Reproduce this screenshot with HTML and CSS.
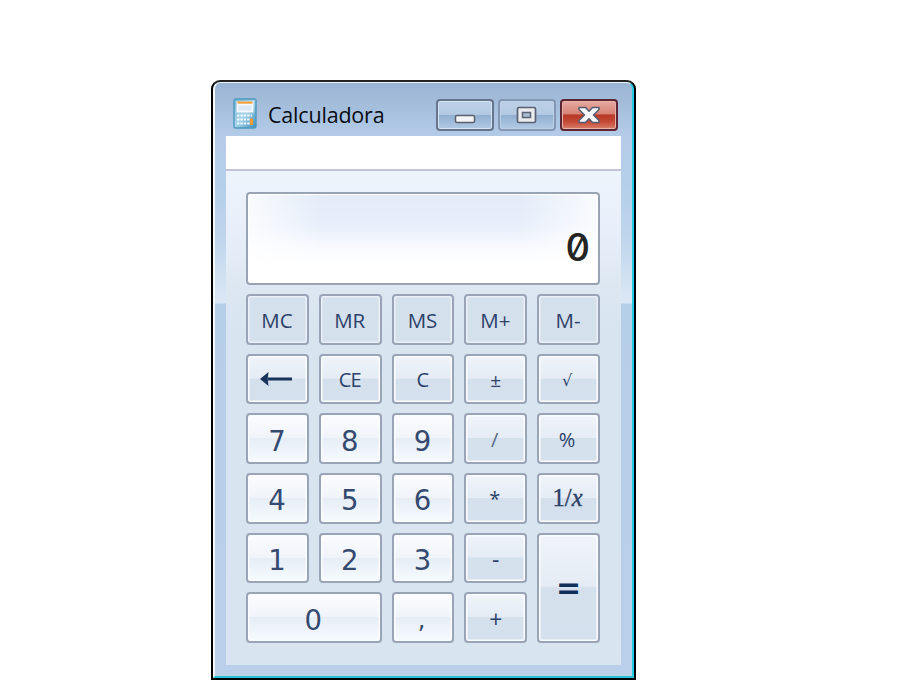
FILE: index.html
```html
<!DOCTYPE html>
<html lang="es">
<head>
<meta charset="utf-8">
<title>Calculadora</title>
<link rel="stylesheet" href="styles.css">
</head>
<body>
<main class="window">
  <div class="frame">
    <header class="titlebar">
      <svg class="app-icon" width="24" height="31" viewBox="0 0 24 31">
        <defs>
          <linearGradient id="case" x1="0" y1="0" x2="1" y2="1"><stop offset="0" stop-color="#79b5d3"/><stop offset=".5" stop-color="#a9d4ea"/><stop offset="1" stop-color="#3e8fb8"/></linearGradient>
        </defs>
        <rect x="1" y="1" width="22" height="29" rx="1.5" fill="url(#case)" stroke="#4c9abf" stroke-width="1.4"/>
        <rect x="3.5" y="3.5" width="17" height="11" fill="#f2f8fc"/>
        <rect x="4.5" y="3.5" width="15" height="2.2" fill="#f2a23c"/>
        <rect x="5.5" y="7.5" width="13" height="5" fill="#dbe9f7"/>
        <path d="M4 17.500h15M4 21.500h13M4 25.500h13" stroke="#edf8ff" stroke-width="2.200" stroke-dasharray="2.400 1"/>
        <rect x="17" y="20.500" width="3" height="6.500" fill="#f29a2e"/>
      </svg>
      <h1 class="title">Calculadora</h1>
      <div class="controls">
        <button class="ctl minimize" aria-label="Minimizar"><svg width="56" height="30" viewBox="0 0 56 30"><rect x="18.500" y="15.500" width="19" height="7" rx="1.500" fill="#f5f5f5" stroke="#5a6070" stroke-width="1.500"/></svg></button>
        <button class="ctl maximize" aria-label="Maximizar"><svg width="56" height="30" viewBox="0 0 56 30"><rect x="18.500" y="7.500" width="18" height="15" rx="1.500" fill="#e9ebef" stroke="#5a6272" stroke-width="1.700"/><rect x="23.500" y="12.500" width="8" height="5" fill="#a9bdd5" stroke="#5a6272" stroke-width="1.500"/></svg></button>
        <button class="ctl close" aria-label="Cerrar"><svg width="57" height="30" viewBox="0 0 57 30"><path d="M18 7.500h6.500l3.500 3.700 3.500-3.700H38v2L32.500 15l5.500 5.500v2h-6.500L28 18.700l-3.500 3.800H18v-2l5.500-5.500L18 9.500z" fill="#f6f7f8" stroke="#555b70" stroke-width="1.500" stroke-linejoin="round"/></svg></button>
      </div>
    </header>
    <section class="client">
      <div class="menubar"></div>
      <div class="body">
        <output class="display">0</output>
        <div class="keys">
          <button class="key flat">MC</button>
          <button class="key flat">MR</button>
          <button class="key flat">MS</button>
          <button class="key flat">M+</button>
          <button class="key flat">M-</button>
          <button class="key" aria-label="Retroceso"><svg class="arrow" width="32" height="16" viewBox="0 0 32 16"><path d="M8 8h24" stroke="#18345b" stroke-width="3"/><path d="M0 8L8.500 1Q7 8 8.500 15z" fill="#18345b"/></svg></button>
          <button class="key narrow">CE</button>
          <button class="key narrow">C</button>
          <button class="key sign">±</button>
          <button class="key root">√</button>
          <button class="key digit">7</button>
          <button class="key digit">8</button>
          <button class="key digit">9</button>
          <button class="key slash">/</button>
          <button class="key percent">%</button>
          <button class="key digit">4</button>
          <button class="key digit">5</button>
          <button class="key digit">6</button>
          <button class="key star">*</button>
          <button class="key inverse">1/<i>x</i></button>
          <button class="key digit">1</button>
          <button class="key digit">2</button>
          <button class="key digit">3</button>
          <button class="key minus">-</button>
          <button class="key equals" aria-label="Igual">=</button>
          <button class="key digit zero">0</button>
          <button class="key digit comma">,</button>
          <button class="key plus">+</button>
        </div>
      </div>
    </section>
  </div>
</main>
</body>
</html>
```
FILE: styles.css
```css
* { box-sizing: border-box; }
body { margin: 0; padding: 80px 0 0 211px; background: #fff; font-family: "Open Sans", "Noto Sans", sans-serif; }
button { margin: 0; padding: 0; font: inherit; }
.window {
  width: 425px;
  height: 600px;
  border: 2px solid #000;
  border-top-color: #222;
  border-radius: 9px 9px 0 0;
  background: #000;
}
.frame {
  height: 596px;
  padding: 1px 11px 11px;
  border: solid;
  border-width: 1px 2px 2px;
  border-color: #edf3fa #25cde3 #25c2d5 #f5f8fc;
  border-radius: 7px 7px 0 0;
  background: linear-gradient(#9ab5d3 0, #a6bfdd 26px, #b4cce8 54px, #b5cfea 105px, #bdd4eb 150px, #dce8f5 220px, #b6cfe8 221px, #bacfea 100%);
}
.titlebar { display: flex; align-items: flex-start; height: 52px; padding: 14px 3px 0 7px; }
.app-icon { flex: none; }
.title { margin: 1px 0 0 11px; width: 168px; font-size: 21.5px; line-height: 32px; font-weight: 400; color: #080b12; letter-spacing: -.2px; }
.controls { display: flex; gap: 4px; padding-top: 1px; }
.ctl {
  width: 58px;
  height: 32px;
  border: 2px solid #65758e;
  border-radius: 4px;
  background: linear-gradient(#bdd1e7 0, #b3cae3 48%, #92afd0 50%, #b1cae5 100%);
  box-shadow: inset 0 0 0 1px #d6e4f2;
  overflow: hidden;
}
.ctl svg { display: block; margin: -1px 0 0 -1px; }
.maximize { border-color: #8498b5; box-shadow: inset 0 0 0 1px #bcd0e7; }
.close { border-color: #5b2631; background: linear-gradient(#e7aaa0 0, #d78376 46%, #b63725 50%, #c54b37 75%, #d9806a 100%); box-shadow: inset 0 0 0 1px #e9b1a8; }
.client { height: 529px; background: linear-gradient(#edf4fc 34px, #e8effa 95px, #dce7f2 155px, #d8e4f0 195px, #d8e4f0 100%); }
.menubar { height: 35px; border-bottom: 2px solid #c4c3d9; background: #fff; }
.body { padding: 21px 21px 0 20px; }
.display {
  display: block;
  height: 93px;
  padding: 24px 8px 0 0;
  border: 2px solid #98a3b4;
  border-radius: 4px;
  background: linear-gradient(90deg, #fffc 0, #fff0 75px, #fff0 270px, #fffc 100%), linear-gradient(#e2ebf8 0, #e8effb 35%, #f9fbff 62%, #fff 78%);
  box-shadow: inset 0 0 0 1px #fff;
  font: 500 38px/58px Inter, sans-serif;
  font-feature-settings: "zero";
  text-align: right;
  color: #242424;
}
.keys { display: grid; grid-template-columns: repeat(5, 1fr); grid-template-rows: repeat(6, 1fr); gap: 9px 10px; height: 349px; margin-top: 9px; }
.key {
  display: flex;
  align-items: center;
  justify-content: center;
  border: 2px solid #99a5b7;
  border-radius: 4px;
  background: linear-gradient(#f0f4fa 0, #e5ecf5 48%, #d5e0ed 50%, #d4e0ed 100%);
  box-shadow: inset 0 0 0 1.500px #fafcff;
  color: #2d4268;
  font-size: 20px;
  line-height: 28px;
}
.flat { background: #d5e0ed; box-shadow: inset 0 0 0 1.500px #e9f0f8; padding: 2px 1px 0 0; font-size: 20.500px; }
.narrow { letter-spacing: -.8px; padding: 2px 1px 0 0; }
.digit { background: linear-gradient(#fbfcfe 0, #f0f4fa 49%, #e7edf5 50%, #f6fbff 100%); font: 27.500px/32px "DejaVu Sans", sans-serif; padding: 4px 1px 0 0; color: #354a70; }
.arrow { margin: 1px 3px 0 0; }
.sign { font-size: 19px; padding-top: 3px; }
.root { font: 16px/20px "DejaVu Sans", sans-serif; padding: 4px 3px 0 0; }
.percent { padding: 2px 3px 0 0; }
.slash { padding: 2px 2px 0 0; color: #5a6c8a; }
.star { padding: 2px 2px 0 0; }
.inverse { font: 24.500px/28px "Liberation Serif", serif; padding-right: 2px; -webkit-text-stroke: .4px; }
.equals { grid-column: 5; grid-row: 5 / 7; font: bold 30px/32px "DejaVu Sans", sans-serif; color: #10305b; }
.zero { grid-column: span 2; }
.comma { padding-right: 3px; font-size: 24px; }
.minus, .plus { font-size: 23px; padding-top: 2px; }
```
